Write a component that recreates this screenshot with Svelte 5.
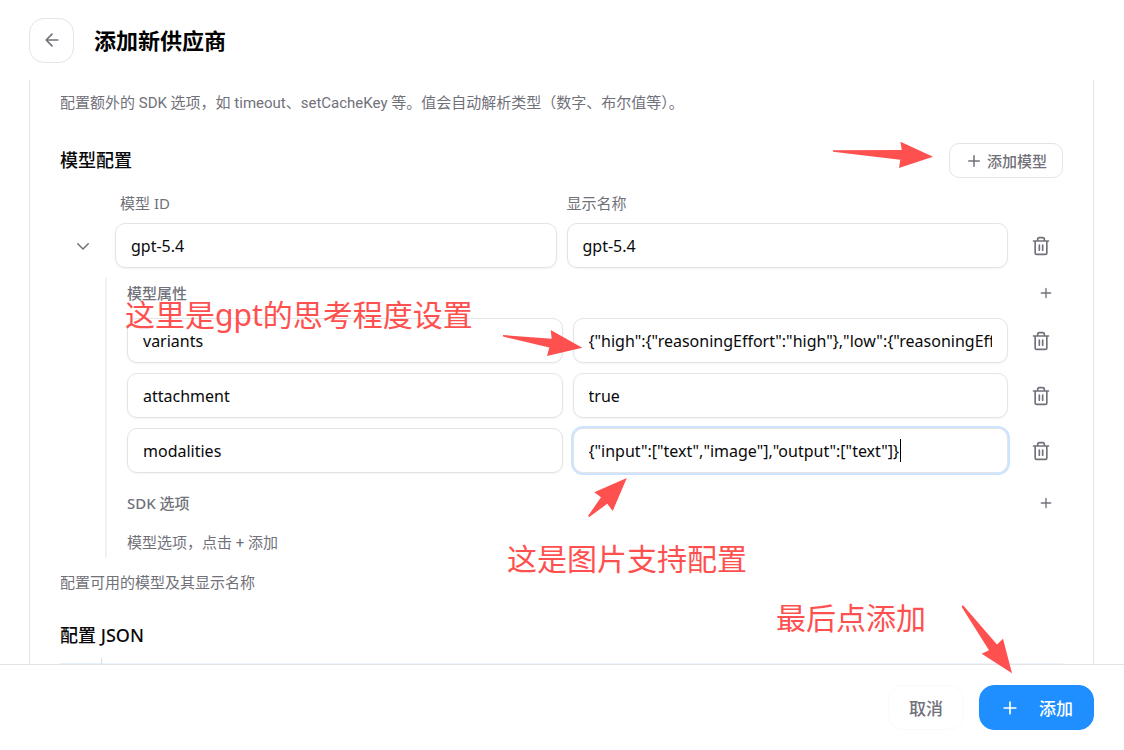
<script>
  import { onMount } from 'svelte';

  let modelId = 'gpt-5.4';
  let modelName = 'gpt-5.4';
  let open = true;

  let properties = [
    {
      key: 'variants',
      value: '{"high":{"reasoningEffort":"high"},"low":{"reasoningEffort":"low"},"medium":{"reasoningEffort":"medium"}}',
    },
    { key: 'attachment', value: 'true' },
    { key: 'modalities', value: '{"input":["text","image"],"output":["text"]}' },
  ];

  let activeIndex = 2;
  let inputs = [];
  let caretLeft = 0;

  // the caret sits right after the text of the active input
  const placeCaret = () => {
    const input = inputs[activeIndex];
    if (!input) return;
    const style = getComputedStyle(input);
    const context = document.createElement('canvas').getContext('2d');
    context.font = `${style.fontSize} ${style.fontFamily}`;
    const end = 16 + context.measureText(input.value).width;
    caretLeft = Math.min(Math.round(end), input.clientWidth - 15);
  };

  onMount(placeCaret);

  const activate = (index) => {
    activeIndex = index;
    placeCaret();
  };

  const addProperty = () => {
    properties = [...properties, { key: '', value: '' }];
  };

  const removeProperty = (index) => {
    properties = properties.filter((_, i) => i !== index);
    activeIndex = -1;
  };
</script>

{#snippet plus(size)}
  <svg class="icon" width={size} height={size} viewBox="0 0 24 24" stroke-width="2">
    <path d="M5 12h14M12 5v14" />
  </svg>
{/snippet}

{#snippet trash()}
  <svg class="icon" width="20" height="20" viewBox="0 0 24 24" stroke-width="2">
    <path d="M3 6h18M19 6v14a2 2 0 0 1-2 2H7a2 2 0 0 1-2-2V6M8 6V4a2 2 0 0 1 2-2h4a2 2 0 0 1 2 2v2M10 11v6M14 11v6" />
  </svg>
{/snippet}

<div class="page">
  <header>
    <button class="back" aria-label="返回">
      <svg class="icon" width="20" height="20" viewBox="0 0 24 24" stroke-width="2">
        <path d="m12 19-7-7 7-7M19 12H5" />
      </svg>
    </button>
    <h1>添加新供应商</h1>
  </header>

  <main>
    <section class="panel">
      <p class="hint">配置额外的 SDK 选项，如 timeout、setCacheKey 等。值会自动解析类型（数字、布尔值等）。</p>

      <div class="section-head">
        <h2>模型配置</h2>
        <button class="add-model">{@render plus(18)}添加模型</button>
      </div>

      <div class="model-row labels">
        <span></span>
        <label class="first" for="model-id">模型 ID</label>
        <label for="model-name">显示名称</label>
      </div>

      <div class="model-row">
        <button class="icon-button" aria-label="展开" aria-expanded={open} on:click={() => (open = !open)}>
          <svg class="icon" width="18" height="18" viewBox="0 0 24 24" stroke-width="2">
            <path d="m5 9 7 7 7-7" />
          </svg>
        </button>
        <input id="model-id" bind:value={modelId} />
        <input id="model-name" bind:value={modelName} />
        <button class="icon-button" aria-label="删除模型">{@render trash()}</button>
      </div>

      {#if open}
        <div class="details">
          <div class="details-head">
            <h3>模型属性</h3>
            <button class="small-button" aria-label="添加属性" on:click={addProperty}>{@render plus(16)}</button>
          </div>
          <div class="properties">
            {#each properties as property, i}
              <div class="property-row">
                <input aria-label="属性名" bind:value={property.key} />
                <div class="value-box">
                  <input
                    class:active={i === activeIndex}
                    aria-label="属性值"
                    bind:this={inputs[i]}
                    bind:value={property.value}
                    on:focus={() => activate(i)}
                    on:input={placeCaret}
                  />
                  {#if i === activeIndex}
                    <span class="caret" style="left: {caretLeft}px"></span>
                  {/if}
                </div>
                <button class="icon-button" aria-label="删除属性" on:click={() => removeProperty(i)}>{@render trash()}</button>
              </div>
            {/each}
          </div>
          <div class="details-head sdk">
            <h3>SDK 选项</h3>
            <button class="small-button" aria-label="添加选项">{@render plus(16)}</button>
          </div>
          <p class="hint empty">模型选项，点击 + 添加</p>
        </div>
      {/if}

      <p class="hint">配置可用的模型及其显示名称</p>

      <h2 class="json-title">配置 JSON</h2>
      <div class="editor">
        <div class="gutter"></div>
        <div class="code"></div>
      </div>
    </section>
  </main>

  <footer>
    <button class="cancel">取消</button>
    <button class="submit">{@render plus(20)}添加</button>
  </footer>

  <div class="notes">
    <svg width="1124" height="750" viewBox="0 0 1124 750">
      <path d="M833 150.2 901.7 150 900.5 141.7 933 156.7 899 168 900.3 159.7 833 151.7z" />
      <path d="M503 335 551.7 338.7 550.7 330 582.3 347.7 547 356 549.3 347.5 503 336.5z" />
      <path d="M626.8 478 594.3 492.3 601 497.3 588 516 589.3 517 607.3 503.7 612.7 511z" />
      <path d="M962 605.5 963.5 605.7 997 644.5 1003 638.7 1012 673.3 981.7 653.7 989 650.3 961.7 607z" />
    </svg>
    <span class="note variants">这里是gpt的思考程度设置</span>
    <span class="note image">这是图片支持配置</span>
    <span class="note final">最后点添加</span>
  </div>
</div>

<style>
  :global(body) {
    margin: 0;
    background: #fff;
  }

  .page {
    position: relative;
    display: flex;
    flex-direction: column;
    height: 100vh;
    overflow: hidden;
    color: #09090b;
    font-family: "Noto Sans", "Noto Sans CJK SC", sans-serif;
    font-size: 17px;
  }

  .page * {
    box-sizing: border-box;
  }

  h1, h2, h3, p {
    margin: 0;
  }

  button {
    display: flex;
    align-items: center;
    justify-content: center;
    padding: 0;
    border: none;
    background: none;
    color: #71717a;
    font: inherit;
    cursor: pointer;
  }

  .icon {
    flex: none;
    fill: none;
    stroke: currentColor;
    stroke-linecap: round;
    stroke-linejoin: round;
  }

  header {
    display: flex;
    align-items: center;
    gap: 20px;
    flex: none;
    height: 80px;
    padding: 0 29px;
  }

  .back {
    width: 45px;
    height: 45px;
    border: 1px solid #e4e4e7;
    border-radius: 15px;
  }

  h1 {
    padding-bottom: 2px;
    font-size: 22px;
    font-weight: 600;
    color: #000;
  }

  main {
    flex: 1;
    min-height: 0;
    padding: 0 30px 0 29px;
    overflow: hidden;
  }

  .panel {
    padding: 13px 30px 30px;
    border: solid #e4e4e7;
    border-width: 0 1px;
  }

  .hint {
    color: #71717a;
    font-family: Roboto, "Noto Sans CJK SC", sans-serif;
    font-size: 15px;
    line-height: 20px;
  }

  .section-head {
    display: flex;
    align-items: center;
    justify-content: space-between;
    margin: 30px 0 15px;
  }

  h2 {
    font-size: 18px;
    font-weight: 500;
    line-height: 25px;
  }

  .add-model {
    gap: 4px;
    height: 35px;
    padding: 0 15px;
    border: 1px solid #e4e4e7;
    border-radius: 10px;
    font-size: 15px;
    font-weight: 500;
  }

  .model-row {
    display: grid;
    grid-template-columns: 45px 1fr 1fr 45px;
    gap: 10px;
  }

  .labels {
    margin-bottom: 10px;
    color: #71717a;
    font-size: 15px;
    line-height: 20px;
  }

  .first {
    padding-left: 5px;
  }

  input {
    width: 100%;
    min-width: 0;
    height: 45px;
    padding: 0 15px;
    border: 1px solid #e4e4e7;
    border-radius: 10px;
    outline: none;
    background: #fff;
    box-shadow: 0 1px 2px rgba(0, 0, 0, 0.05);
    color: #09090b;
    font: inherit;
    font-size: 16px;
  }

  input.active {
    box-shadow: 0 0 0 2px #cce4ff;
    caret-color: transparent;
  }

  .value-box {
    position: relative;
  }

  .caret {
    position: absolute;
    top: 11px;
    width: 1px;
    height: 23px;
    background: #000;
  }

  .icon-button {
    width: 45px;
    height: 45px;
  }

  .details {
    margin: 10px 0 15px 45px;
    padding-left: 20px;
    border-left: 2px solid #f1f1f2;
  }

  .details-head {
    display: flex;
    align-items: center;
    justify-content: space-between;
    height: 30px;
  }

  .sdk {
    margin-top: 15px;
  }

  h3 {
    color: #71717a;
    font-size: 15px;
    font-weight: 500;
    line-height: 20px;
  }

  .small-button {
    width: 35px;
    height: 30px;
  }

  .properties {
    display: flex;
    flex-direction: column;
    gap: 10px;
    margin-top: 10px;
  }

  .property-row {
    display: grid;
    grid-template-columns: 1fr 1fr 45px;
    gap: 10px;
  }

  .empty {
    padding: 15px 0 5px;
  }

  .json-title {
    margin-top: 30px;
  }

  .editor {
    display: flex;
    height: 200px;
    margin-top: 10px;
  }

  .gutter {
    width: 42px;
    border-right: 1px solid #ddd;
    background: linear-gradient(#fff 5px, #e2f2ff 5px);
  }

  .code {
    flex: 1;
    background: linear-gradient(#fff 5px, #eef5fc 5px);
  }

  footer {
    display: flex;
    justify-content: flex-end;
    gap: 15px;
    flex: none;
    padding: 20px 30px;
    border-top: 1px solid #e4e4e7;
    background: #fff;
  }

  footer button {
    height: 45px;
    padding: 0 20px;
    border: 1px solid #fafafa;
    border-radius: 15px;
    font-weight: 500;
  }

  footer .submit {
    gap: 19px;
    border-color: #1f8fff;
    background: #1f8fff;
    color: #fff;
  }

  /* red callouts laid over the form */
  .notes {
    position: absolute;
    inset: 0;
    pointer-events: none;
  }

  .notes svg {
    display: block;
    fill: #ff5050;
  }

  .note {
    position: absolute;
    color: #ff5050;
    font-size: 30px;
    line-height: 40px;
    white-space: nowrap;
  }

  .variants {
    left: 125px;
    top: 295px;
  }

  .image {
    left: 507px;
    top: 539px;
  }

  .final {
    left: 776px;
    top: 598px;
  }
</style>
